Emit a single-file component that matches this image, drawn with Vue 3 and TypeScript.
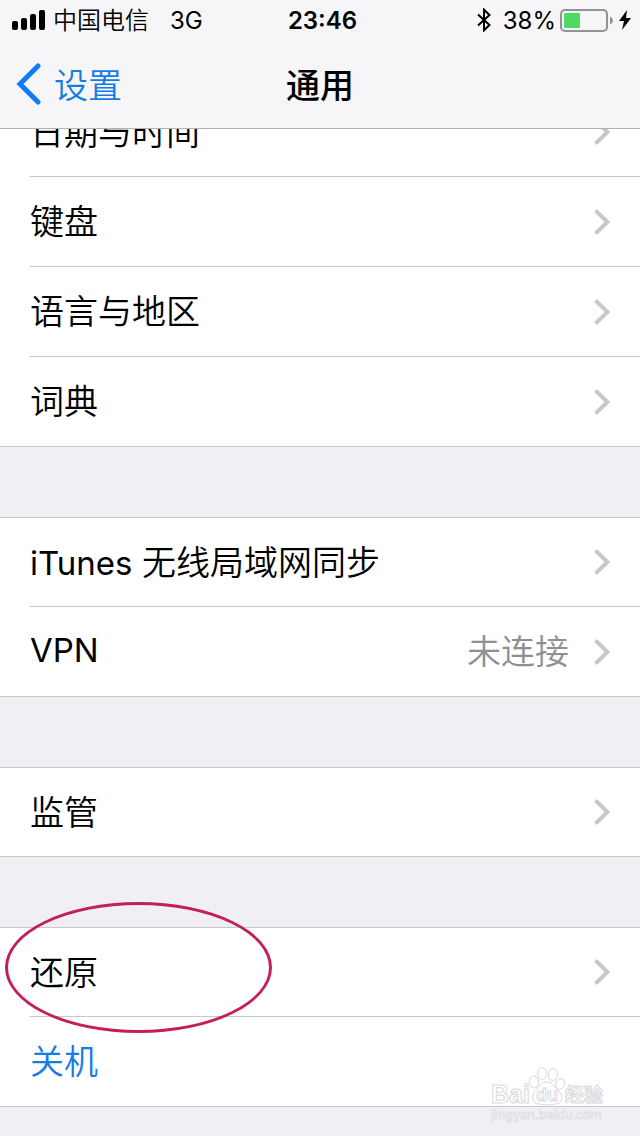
<script setup lang="ts">
interface Row {
  latin?: string
  label?: string
  value?: string
  action?: boolean
  marked?: boolean
}

const groups: Row[][] = [
  [
    { label: '日期与时间' },
    { label: '键盘' },
    { label: '语言与地区' },
    { label: '词典' },
  ],
  [{ latin: 'iTunes', label: ' 无线局域网同步' }, { latin: 'VPN', value: '未连接' }],
  [{ label: '监管' }],
  [{ label: '还原', marked: true }, { label: '关机', action: true }],
]
</script>

<template>
  <div class="page">
    <header class="header">
      <div class="status">
        <div class="status-side">
          <svg class="signal" viewBox="0 0 33 20" aria-hidden="true">
            <rect x="0" y="11" width="6" height="9" rx="2" />
            <rect x="9" y="8" width="6" height="12" rx="2" />
            <rect x="18" y="4" width="6" height="16" rx="2" />
            <rect x="27" y="0" width="6" height="20" rx="2" />
          </svg>
          <span class="carrier">中国电信</span>
          <span>3G</span>
        </div>
        <time class="clock">23:46</time>
        <div class="status-side status-right">
          <svg class="bluetooth" viewBox="0 0 14 24" aria-hidden="true">
            <path d="M1 6.5 L12.5 17 L7 22.3 V1.7 L12.5 7 L1 17.5" />
          </svg>
          <span class="percent">38%</span>
          <svg class="battery" viewBox="0 0 53 23" aria-hidden="true">
            <rect class="shell" x="1" y="1" width="46" height="21" rx="4" />
            <rect class="charge" x="4" y="4" width="16" height="15" rx="1" />
            <path class="nub" d="M50 7.5 Q53 9 53 11.5 Q53 14 50 15.5 Z" />
          </svg>
          <svg class="bolt" viewBox="0 0 12 20" aria-hidden="true">
            <path d="M8 0 L0 11 H5 L3 20 L12 8 H7 Z" />
          </svg>
        </div>
      </div>
      <nav class="nav">
        <a class="back" href="#settings">
          <svg class="back-icon" viewBox="0 0 26 42" aria-hidden="true">
            <path d="M22 3 L4 21 L22 39" />
          </svg>
          <span>设置</span>
        </a>
        <h1 class="title">通用</h1>
      </nav>
    </header>

    <main class="content">
      <ul v-for="(group, index) in groups" :key="index" class="group">
        <li v-for="(row, position) in group" :key="position" class="item">
          <button type="button" class="row" :class="{ action: row.action }">
            <span class="label"><span v-if="row.latin" class="latin">{{ row.latin }}</span>{{ row.label }}</span>
            <span v-if="row.value" class="value">{{ row.value }}</span>
            <svg v-if="!row.action" class="chevron" viewBox="0 0 16 26" aria-hidden="true">
              <path d="M1.5 1.5 L13.5 13 L1.5 24.5" />
            </svg>
          </button>
          <span v-if="row.marked" class="ring"></span>
          <svg v-if="row.action" class="watermark" viewBox="0 0 120 56" aria-hidden="true">
            <g>
              <ellipse cx="43" cy="15" rx="4.5" ry="6" transform="rotate(-12 43 15)" />
              <ellipse cx="51" cy="6.5" rx="4.5" ry="6" />
              <ellipse cx="62" cy="7.5" rx="4.5" ry="6" transform="rotate(12 62 7.5)" />
              <ellipse cx="69" cy="17" rx="4.5" ry="5.5" transform="rotate(25 69 17)" />
              <path d="M56 15 C50 15 49 20 45 23 C40 27 40 37 48 37 C52 38 61 38 64 37 C73 37 72 27 67 23 C63 20 62 15 56 15 Z" />
            </g>
            <text class="brand" x="0" y="36">Bai</text>
            <text class="du" x="45" y="34">du</text>
            <text class="cn" x="74" y="35">经验</text>
            <text class="site" x="0" y="52">jingyan.baidu.com</text>
          </svg>
        </li>
      </ul>
    </main>
  </div>
</template>

<style>
body {
  margin: 0;
  background: #efeff4;
}
</style>

<style scoped>
.page {
  min-height: 100vh;
  box-sizing: border-box;
  background: #efeff4;
  color: #000;
  font-family: Inter, "Noto Sans CJK SC", sans-serif;
  font-size: 34px;
}

.header {
  position: sticky;
  top: 0;
  z-index: 2;
  background: #f6f6f8;
  border-bottom: 1px solid #b2b2b4;
}

.status {
  display: grid;
  grid-template-columns: 1fr auto 1fr;
  align-items: center;
  height: 40px;
  padding: 0 9px 0 12px;
  font-size: 24px;
  line-height: 42px;
}

.status-side {
  display: flex;
  align-items: center;
}

.status-side svg {
  margin-bottom: 2px;
}

.status-right {
  justify-content: flex-end;
}

.signal {
  width: 33px;
  height: 20px;
  margin-right: 8px;
}

.carrier {
  margin-right: 21px;
  font-weight: 350;
}

.clock {
  padding-left: 2px;
  font-weight: 600;
}

.bluetooth {
  width: 14px;
  height: 24px;
  margin-right: 12px;
  fill: none;
  stroke: #000;
  stroke-width: 2;
}

.percent {
  margin-right: 4px;
}

.battery {
  width: 53px;
  height: 23px;
  margin-right: 6px;
}

.shell {
  fill: none;
  stroke: #929294;
  stroke-width: 2;
}

.charge {
  fill: #4cd964;
}

.nub {
  fill: #929294;
}

.bolt {
  width: 12px;
  height: 20px;
}

.nav {
  display: grid;
  grid-template-columns: 1fr auto 1fr;
  align-items: center;
  height: 88px;
  padding: 0 16px;
}

.back {
  display: flex;
  align-items: center;
  gap: 12px;
  color: #147ce6;
  font-weight: 350;
  text-decoration: none;
}

.back span,
.title {
  padding-bottom: 2px;
}

.label,
.value {
  padding-bottom: 4px;
}

.back-icon {
  width: 26px;
  height: 42px;
  fill: none;
  stroke: #0f7bf8;
  stroke-width: 5;
  stroke-linecap: round;
}

.title {
  margin: 0;
  font-size: 34px;
  font-weight: 500;
}

.content {
  display: flex;
  flex-direction: column;
  gap: 70px;
  margin-top: -42px;
  padding-bottom: 29px;
}

.group {
  margin: 0;
  padding: 0;
  list-style: none;
  background: #fff;
}

.item {
  position: relative;
  display: flex;
  box-sizing: border-box;
  height: 90px;
  padding-left: 30px;
}

.item:first-child {
  border-top: 1px solid #c8c7cc;
}

.item:last-child {
  border-bottom: 1px solid #c8c7cc;
}

.row {
  display: flex;
  flex: 1;
  align-items: center;
  box-sizing: border-box;
  padding: 0 30px 0 0;
  border: 0;
  border-bottom: 1px solid #c8c7cc;
  background: none;
  color: #000;
  font: inherit;
  font-weight: 350;
  text-align: left;
}

.item:last-child .row {
  border-bottom: 0;
}

.row.action {
  color: #147ce6;
}

.label {
  flex: 1;
  white-space: pre-wrap;
}

.latin {
  font-size: 33px;
  font-weight: 400;
}

.value {
  margin-right: 25px;
  color: #8e8e93;
}

.chevron {
  width: 16px;
  height: 26px;
  fill: none;
  stroke: #c7c7cc;
  stroke-width: 4;
}

.ring {
  position: absolute;
  z-index: 1;
  top: -26px;
  left: 5px;
  box-sizing: border-box;
  width: 267px;
  height: 131px;
  border: 3px solid #c41e5c;
  border-radius: 50%;
  pointer-events: none;
}

.watermark {
  position: absolute;
  top: 50px;
  right: 29px;
  width: 120px;
  height: 56px;
  overflow: visible;
  fill: #fff;
  stroke: #d9d9dc;
  stroke-width: 1;
  pointer-events: none;
}

.brand {
  font-family: "Liberation Sans", sans-serif;
  font-size: 25px;
  font-weight: 700;
}

.cn {
  font-family: "Noto Sans CJK SC", sans-serif;
  font-size: 19px;
  font-weight: 700;
}

.du {
  font-family: "Liberation Sans", sans-serif;
  font-size: 18px;
  font-weight: 700;
}

.site {
  font-family: "DejaVu Sans", sans-serif;
  font-size: 12px;
  fill: #f7f7fa;
  stroke: #e2e2e6;
}
</style>
